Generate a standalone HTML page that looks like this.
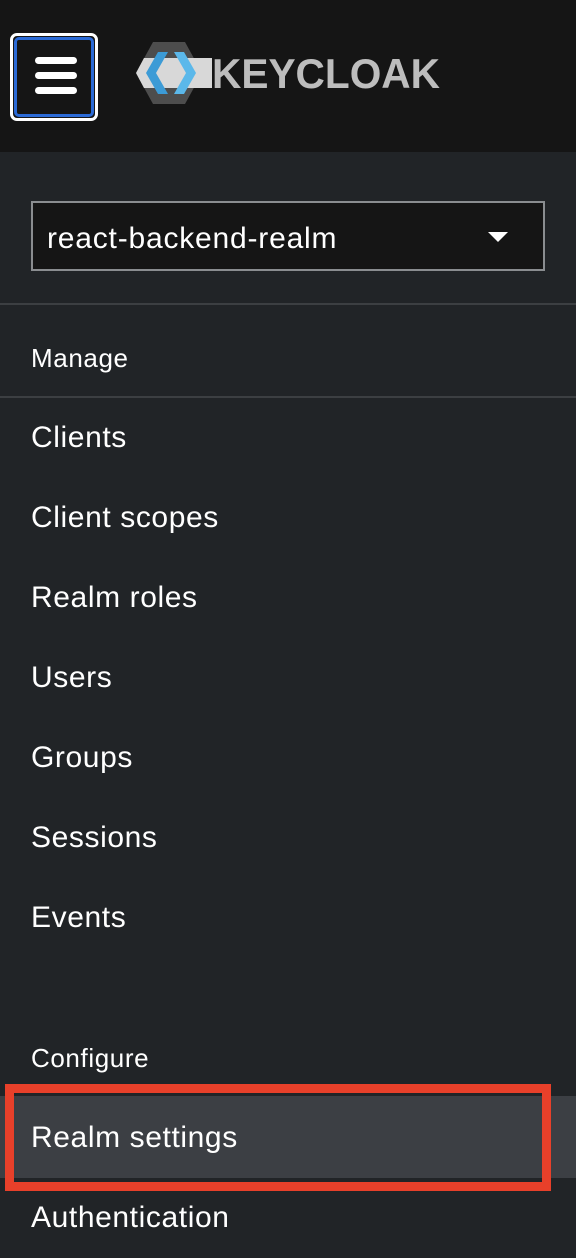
<!DOCTYPE html>
<html><head><style>
body{margin:0;width:576px;height:1258px;background:#212427;font-family:"Liberation Sans",sans-serif;color:#fff;position:relative;overflow:hidden}
.hdr{position:absolute;left:0;top:0;width:576px;height:152px;background:#151515}
.burger{position:absolute;left:10px;top:33px;width:88px;height:88px;border:3px solid #fff;border-radius:7px;box-sizing:border-box;}
.burger .in{position:absolute;inset:1px;border:3px solid #2b6ad6;border-radius:5px;background:#151515}
.bar{position:absolute;left:18px;width:42px;height:7px;background:#fff;border-radius:4px}
.t{position:absolute;left:31px;font-size:30px;letter-spacing:0.6px;line-height:1;white-space:nowrap}
.sel{position:absolute;left:31px;top:201px;width:514px;height:70px;border:2px solid #8a8d90;box-sizing:border-box;background:#151515}
.hr{position:absolute;left:0;width:576px;height:2px;background:#3c3f42}
</style></head><body>
<div class="hdr">
 <div class="burger"><div class="in">
  <div class="bar" style="top:17px"></div><div class="bar" style="top:32px"></div><div class="bar" style="top:47px"></div>
 </div></div>
 <svg style="position:absolute;left:136px;top:40px" width="310" height="66" viewBox="0 0 310 66">
  <polygon points="17,2 49,2 66,33 49,64 17,64 0,33" fill="#4d4d4d"/>
  <polygon points="0,33 8,18 76,18 76,48 8,48" fill="#d8d8d8"/>
  <polygon points="22,12 32,12 20,33 32,54 22,54 10,33" fill="#3c9bd6"/>
  <polygon points="38,12 48,12 60,33 48,54 38,54 50,33" fill="#5bb8ea"/>
  <text x="76" y="48" font-family="Liberation Sans" font-weight="bold" font-size="42" fill="#bdbdbd" textLength="228" lengthAdjust="spacingAndGlyphs">KEYCLOAK</text>
 </svg>
</div>
<div class="sel"><span style="position:absolute;left:14px;top:19px;font-size:30px;letter-spacing:0.8px">react-backend-realm</span>
 <svg style="position:absolute;left:455px;top:29px" width="20" height="12"><polygon points="0,0 20,0 10,10" fill="#fff"/></svg></div>
<div class="hr" style="top:303px"></div>
<div class="t" style="top:345px;font-size:26px">Manage</div>
<div class="hr" style="top:396px"></div>
<div class="t" style="top:423px">Clients</div>
<div class="t" style="top:503px">Client scopes</div>
<div class="t" style="top:583px">Realm roles</div>
<div class="t" style="top:663px">Users</div>
<div class="t" style="top:743px">Groups</div>
<div class="t" style="top:823px">Sessions</div>
<div class="t" style="top:903px">Events</div>
<div class="t" style="top:1045px;font-size:26px">Configure</div>
<div style="position:absolute;left:0;top:1096px;width:576px;height:82px;background:#3c3f44"></div>
<div style="position:absolute;left:5px;top:1084px;width:546px;height:107px;border:9px solid #e8402a;box-sizing:border-box"></div>
<div class="t" style="top:1123px">Realm settings</div>
<div class="t" style="top:1203px">Authentication</div>
</body></html>
